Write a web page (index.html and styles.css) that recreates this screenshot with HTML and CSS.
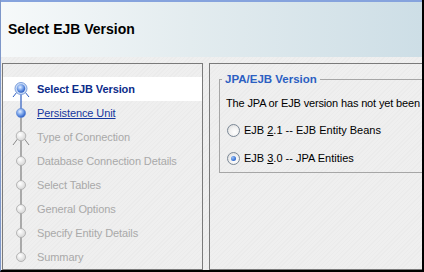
FILE: index.html
```html
<!DOCTYPE html>
<html lang="en">
<head>
    <meta charset="UTF-8">
    <title>Select EJB Version</title>
    <link rel="stylesheet" href="styles.css">
</head>
<body>
    <div class="window">
        <div class="header">
            <h1>Select EJB Version</h1>
        </div>

        <div class="panes">
            <div class="nav">
                <ul class="steps">
                    <li class="step current">
                        <svg class="track" viewBox="0 0 24 24" width="24" height="24">
                            <defs>
                                <radialGradient id="ball" cx="40%" cy="35%" r="65%">
                                    <stop offset="0" stop-color="#e4efff"/>
                                    <stop offset="0.5" stop-color="#7fa8ec"/>
                                    <stop offset="1" stop-color="#2a5cc4"/>
                                </radialGradient>
                                <radialGradient id="pearl" cx="40%" cy="35%" r="65%">
                                    <stop offset="0" stop-color="#ffffff"/>
                                    <stop offset="1" stop-color="#d6d6d6"/>
                                </radialGradient>
                            </defs>
                            <line x1="12" y1="12" x2="12" y2="24" stroke="#2d5cc0" stroke-width="1.2"/>
                            <line x1="8" y1="15" x2="4" y2="20" stroke="#2d5cc0" stroke-width="1"/>
                            <line x1="16" y1="15" x2="20" y2="20" stroke="#2d5cc0" stroke-width="1"/>
                            <circle cx="12" cy="11.5" r="6" fill="#c9dbf6" stroke="#7d9fdb" stroke-width="1"/>
                            <circle cx="12" cy="11.5" r="4.2" fill="url(#ball)"/>
                        </svg>
                        <span class="label">Select EJB Version</span>
                    </li>
                    <li class="step">
                        <svg class="track" viewBox="0 0 24 24" width="24" height="24">
                            <line x1="12" y1="0" x2="12" y2="12" stroke="#2d5cc0" stroke-width="1.2"/>
                            <line x1="12" y1="12" x2="12" y2="24" stroke="#7c7c7c" stroke-width="1.2"/>
                            <circle cx="12" cy="12" r="4.6" fill="url(#ball)" stroke="#5f88d4" stroke-width="0.6"/>
                        </svg>
                        <a class="label link" href="#">Persistence Unit</a>
                    </li>
                    <li class="step off">
                        <svg class="track" viewBox="0 0 24 24" width="24" height="24">
                            <line x1="12" y1="0" x2="12" y2="24" stroke="#7c7c7c" stroke-width="1.2"/>
                            <line x1="8.5" y1="14" x2="4" y2="20" stroke="#8a8a8a" stroke-width="1"/>
                            <line x1="15.5" y1="14" x2="20" y2="20" stroke="#8a8a8a" stroke-width="1"/>
                            <circle cx="12" cy="11" r="4.8" fill="url(#pearl)" stroke="#a8a8a8" stroke-width="0.8"/>
                        </svg>
                        <span class="label">Type of Connection</span>
                    </li>
                    <li class="step off">
                        <svg class="track" viewBox="0 0 24 24" width="24" height="24">
                            <line x1="12" y1="0" x2="12" y2="24" stroke="#7c7c7c" stroke-width="1.2"/>
                            <circle cx="12" cy="12" r="4.5" fill="url(#pearl)" stroke="#a8a8a8" stroke-width="0.8"/>
                        </svg>
                        <span class="label">Database Connection Details</span>
                    </li>
                    <li class="step off">
                        <svg class="track" viewBox="0 0 24 24" width="24" height="24">
                            <line x1="12" y1="0" x2="12" y2="24" stroke="#7c7c7c" stroke-width="1.2"/>
                            <circle cx="12" cy="12" r="4.5" fill="url(#pearl)" stroke="#a8a8a8" stroke-width="0.8"/>
                        </svg>
                        <span class="label">Select Tables</span>
                    </li>
                    <li class="step off">
                        <svg class="track" viewBox="0 0 24 24" width="24" height="24">
                            <line x1="12" y1="0" x2="12" y2="24" stroke="#7c7c7c" stroke-width="1.2"/>
                            <circle cx="12" cy="12" r="4.5" fill="url(#pearl)" stroke="#a8a8a8" stroke-width="0.8"/>
                        </svg>
                        <span class="label">General Options</span>
                    </li>
                    <li class="step off">
                        <svg class="track" viewBox="0 0 24 24" width="24" height="24">
                            <line x1="12" y1="0" x2="12" y2="24" stroke="#7c7c7c" stroke-width="1.2"/>
                            <circle cx="12" cy="12" r="4.5" fill="url(#pearl)" stroke="#a8a8a8" stroke-width="0.8"/>
                        </svg>
                        <span class="label">Specify Entity Details</span>
                    </li>
                    <li class="step off">
                        <svg class="track" viewBox="0 0 24 24" width="24" height="24">
                            <line x1="12" y1="0" x2="12" y2="12" stroke="#7c7c7c" stroke-width="1.2"/>
                            <circle cx="12" cy="12" r="4.5" fill="url(#pearl)" stroke="#a8a8a8" stroke-width="0.8"/>
                        </svg>
                        <span class="label">Summary</span>
                    </li>
                </ul>
            </div>

            <div class="content">
                <fieldset class="group">
                    <legend>JPA/EJB Version</legend>
                    <p class="note">The JPA or EJB version has not yet been</p>
                    <label class="radio">
                        <span class="knob"></span>
                        <span>EJB <u>2</u>.1 -- EJB Entity Beans</span>
                    </label>
                    <label class="radio checked">
                        <span class="knob"></span>
                        <span>EJB <u>3</u>.0 -- JPA Entities</span>
                    </label>
                </fieldset>
            </div>
        </div>
    </div>
</body>
</html>
```

FILE: styles.css
```css
html, body {
    margin: 0;
    padding: 0;
}
body {
    font-family: "Liberation Sans", Arial, sans-serif;
    font-size: 11px;
    color: #000;
    background: #efefef;
}
.window {
    width: 424px;
    height: 272px;
    box-sizing: border-box;
    border-left: 1px solid #7e97c9;
    border-right: 2px solid #000;
    border-bottom: 2px solid #000;
    overflow: hidden;
    display: flex;
    flex-direction: column;
    background: repeating-linear-gradient(135deg, #efefef 0 2px, #ebebeb 2px 3px);
}
.header {
    height: 57px;
    box-sizing: border-box;
    border-top: 2px solid #86a3dd;
    padding: 19px 0 0 7px;
    background: linear-gradient(90deg, #f6f9fa 0%, #e3ecef 45%, #cddee6 100%);
}
.header h1 {
    margin: 0;
    font-size: 14px;
    line-height: 16px;
    font-weight: bold;
}
.panes {
    flex: 1;
    display: flex;
    gap: 6px;
    margin-top: 6px;
    padding-left: 1px;
    min-height: 0;
}
.nav {
    width: 201px;
    flex: none;
    box-sizing: border-box;
    border: 1px solid #7a7a7a;
}
.steps {
    list-style: none;
    margin: 0;
    padding: 13px 0 0;
}
.step {
    height: 24px;
    display: flex;
    align-items: center;
}
.step.current {
    background: #fff;
}
.track {
    display: block;
    flex: none;
    margin-left: 6px;
    margin-right: 4px;
}
.label {
    white-space: nowrap;
    letter-spacing: -0.1px;
}
.current .label {
    font-weight: bold;
    color: #0c2c8a;
}
.link {
    color: #15379e;
    text-decoration: underline;
}
.off .label {
    color: #a9a9a9;
}
.content {
    width: 240px;
    flex: none;
    box-sizing: border-box;
    border: 1px solid #7a7a7a;
    padding: 9px 0 0 9px;
}
.group {
    margin: 0;
    padding: 0 0 7px 2px;
    border: 1px solid #a6a6a6;
    border-right: none;
    min-width: 0;
}
.group legend {
    padding: 0 3px;
    font-size: 11.5px;
    line-height: 13px;
    font-weight: bold;
    color: #2c5fc2;
}
.note {
    margin: 10px 0 0 4px;
    line-height: 14px;
    white-space: nowrap;
    letter-spacing: -0.15px;
}
.radio {
    display: flex;
    align-items: center;
    gap: 4px;
    margin: 13px 0 0 5px;
    line-height: 14px;
    white-space: nowrap;
}
.radio.checked {
    margin-top: 14px;
}
.knob {
    width: 13px;
    height: 13px;
    box-sizing: border-box;
    border: 1px solid #7b8896;
    border-radius: 50%;
    background: radial-gradient(circle at 60% 65%, #ffffff 0%, #f2f2f2 45%, #d4d4d4 100%);
    display: flex;
    align-items: center;
    justify-content: center;
}
.checked .knob::after {
    content: "";
    width: 5px;
    height: 5px;
    border-radius: 50%;
    background: radial-gradient(circle at 35% 35%, #9cc2f5 0%, #3a74d6 60%, #1d4fb0 100%);
}
```
